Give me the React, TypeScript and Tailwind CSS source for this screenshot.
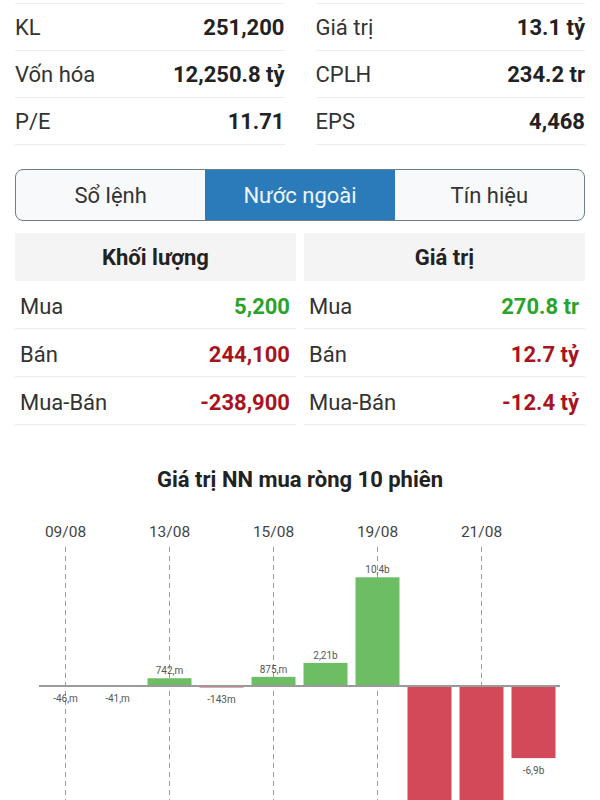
import React from "react";

const stats: [string, string, string, string][] = [
  ["KL", "251,200", "Giá trị", "13.1 tỷ"],
  ["Vốn hóa", "12,250.8 tỷ", "CPLH", "234.2 tr"],
  ["P/E", "11.71", "EPS", "4,468"],
];

const SCALE = 10.45;
const ZERO = 192; // svg y of zero line (686 - 494)
const bars: { v: number; label: string }[] = [
  { v: -0.046, label: "-46,m" },
  { v: -0.041, label: "-41,m" },
  { v: 0.742, label: "742,m" },
  { v: -0.143, label: "-143m" },
  { v: 0.875, label: "875,m" },
  { v: 2.21, label: "2,21b" },
  { v: 10.4, label: "10,4b" },
  { v: -13.5, label: "" },
  { v: -13.5, label: "" },
  { v: -6.9, label: "-6,9b" },
];
const dates: [number, string][] = [
  [0, "09/08"],
  [2, "13/08"],
  [4, "15/08"],
  [6, "19/08"],
  [8, "21/08"],
];

function StatCol({ rows }: { rows: [string, string][] }) {
  return (
    <div className="flex flex-col border-t border-[#efefef]">
      {rows.map(([l, v]) => (
        <div key={l} className="h-[47px] flex items-center justify-between border-b border-[#ececec]">
          <span className="text-[22px] text-[#333]">{l}</span>
          <span className="text-[22px] font-bold text-[#222]">{v}</span>
        </div>
      ))}
    </div>
  );
}

function FlowTable({ title, rows }: { title: string; rows: [string, string, string][] }) {
  return (
    <div className="flex flex-col">
      <div className="h-[48px] bg-[#f4f4f4] flex items-center justify-center text-[22px] font-bold text-[#222]">
        {title}
      </div>
      {rows.map(([l, v, c]) => (
        <div key={l} className="h-[48px] pt-[3px] flex items-center justify-between pl-[5px] pr-[6px] border-b border-[#ececec]">
          <span className="text-[22px] text-[#333]">{l}</span>
          <span className={`text-[22px] font-bold ${c}`}>{v}</span>
        </div>
      ))}
    </div>
  );
}

export default function App() {
  const x0 = 43.5;
  const pitch = 52;
  const bw = 44;
  return (
    <div className="w-[600px] h-[800px] overflow-hidden bg-white font-['Roboto',sans-serif]">
      <div className="px-[15px] pt-[3px] grid grid-cols-2 gap-x-[31px]">
        <StatCol rows={stats.map((r) => [r[0], r[1]] as [string, string])} />
        <StatCol rows={stats.map((r) => [r[2], r[3]] as [string, string])} />
      </div>

      <div className="mx-[15px] mt-[24px] h-[52px] flex border border-[#6f7e8a] rounded-[8px] overflow-hidden bg-[#f8f9fa]">
        <div className="flex-1 flex items-center justify-center text-[22px] text-[#333]">Sổ lệnh</div>
        <div className="flex-1 flex items-center justify-center text-[22px] text-[#eef5fb] bg-[#2b7bba]">Nước ngoài</div>
        <div className="flex-1 flex items-center justify-center text-[22px] text-[#333]">Tín hiệu</div>
      </div>

      <div className="mx-[15px] mt-[12px] grid grid-cols-2 gap-x-[8px]">
        <FlowTable
          title="Khối lượng"
          rows={[
            ["Mua", "5,200", "text-[#2aa32a]"],
            ["Bán", "244,100", "text-[#a8141e]"],
            ["Mua-Bán", "-238,900", "text-[#a8141e]"],
          ]}
        />
        <FlowTable
          title="Giá trị"
          rows={[
            ["Mua", "270.8 tr", "text-[#2aa32a]"],
            ["Bán", "12.7 tỷ", "text-[#a8141e]"],
            ["Mua-Bán", "-12.4 tỷ", "text-[#a8141e]"],
          ]}
        />
      </div>

      <div className="mt-[41px] h-[28px] leading-[28px] text-center text-[22px] font-bold text-[#222]">
        Giá trị NN mua ròng 10 phiên
      </div>

      <svg width="600" height="306" viewBox="0 0 600 306" className="block">
        {dates.map(([i, d]) => {
          const cx = x0 + pitch * i + bw / 2;
          return (
            <g key={d}>
              <text x={cx} y={43} textAnchor="middle" fontSize="15.5" fill="#444" fontFamily="Roboto">
                {d}
              </text>
              <line x1={cx} y1={53} x2={cx} y2={306} stroke="#9a9a9a" strokeWidth="1" strokeDasharray="5 4" />
            </g>
          );
        })}
        {bars.map((b, i) => {
          const x = x0 + pitch * i;
          const h = Math.abs(b.v) * SCALE;
          const pos = b.v >= 0;
          const y = pos ? ZERO - h : ZERO;
          const cx = x + bw / 2;
          return (
            <g key={i}>
              <rect x={x} y={y} width={bw} height={Math.max(h, 0.5)} fill={pos ? "#6cbd64" : "#d24a5a"} />
              {b.label && (
                <text
                  x={cx}
                  y={pos ? y - 4 : y + h + 16}
                  textAnchor="middle"
                  fontSize="10"
                  fill="#555"
                  fontFamily="Roboto"
                >
                  {b.label}
                </text>
              )}
            </g>
          );
        })}
        <line x1={39} y1={ZERO} x2={560} y2={ZERO} stroke="#9a9a9a" strokeWidth="2" />
      </svg>
    </div>
  );
}
